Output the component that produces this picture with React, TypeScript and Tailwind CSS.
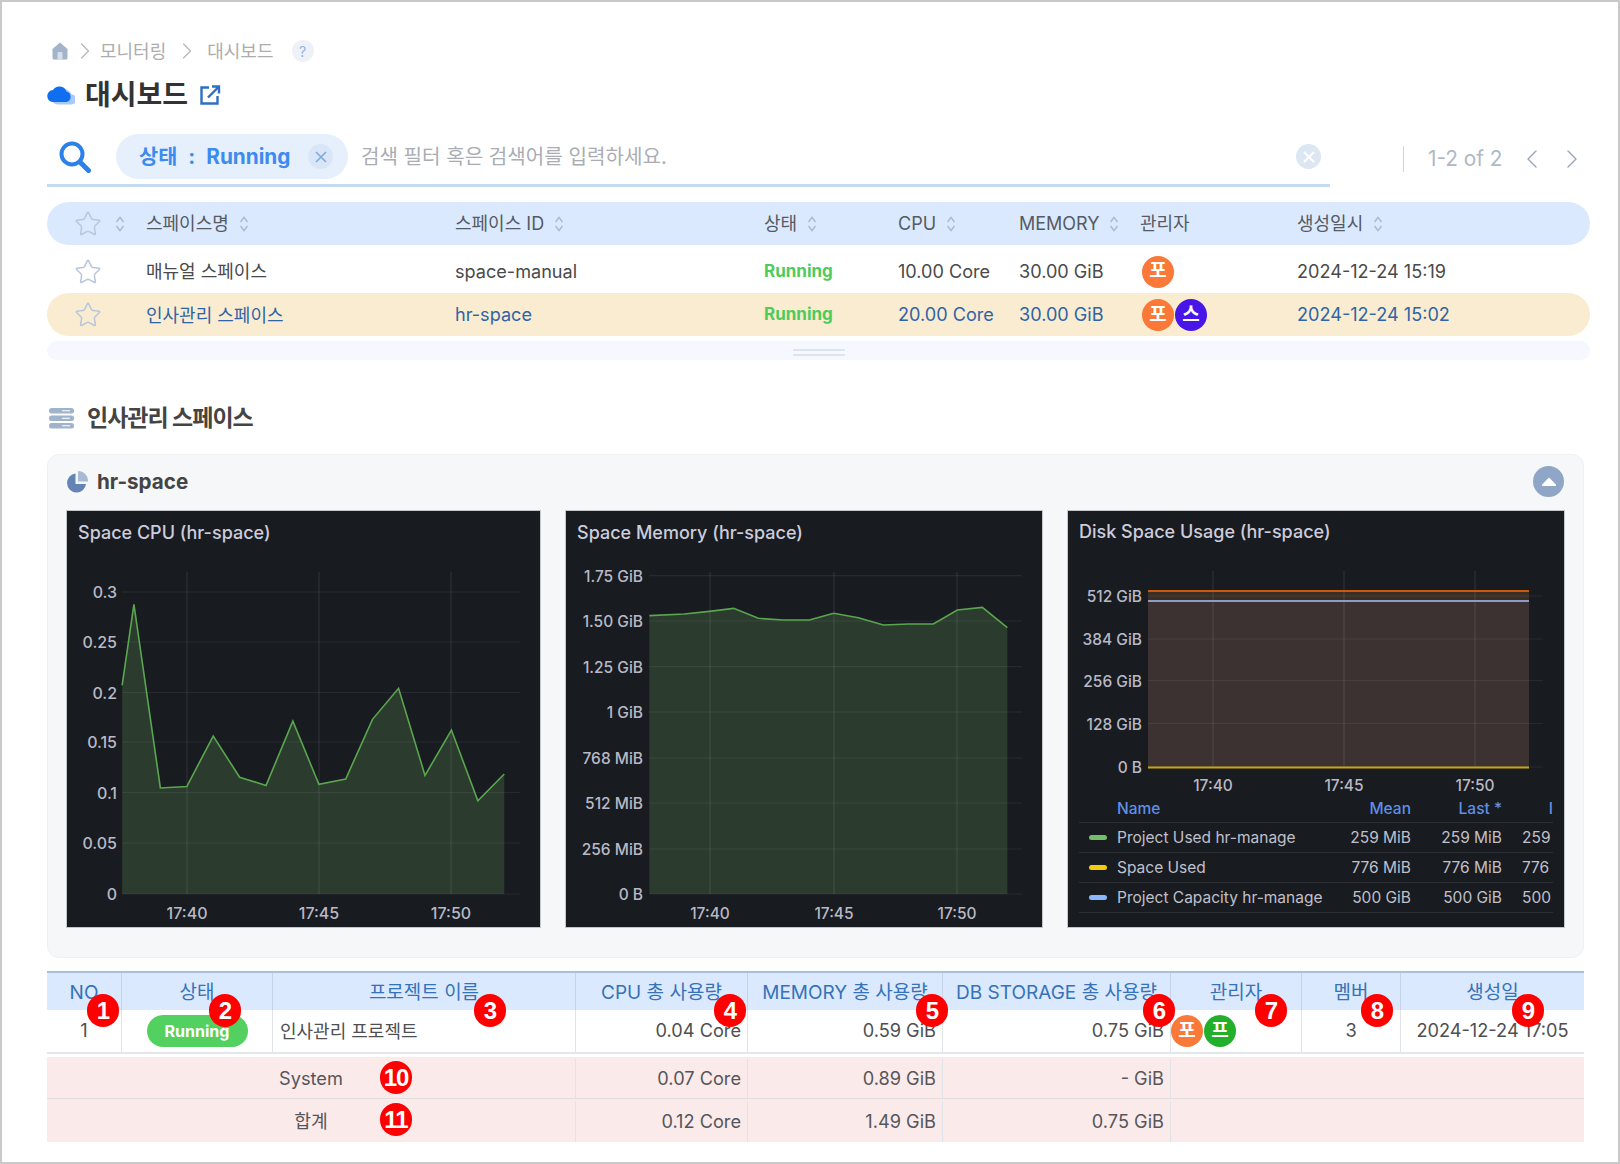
import React from "react";
import { Star, ChevronLeft, ChevronRight, ChevronRight as Crumb } from "lucide-react";

const Sort = () => (
  <svg width="10" height="16" viewBox="0 0 10 16" fill="none" stroke="#a9b9cf" strokeWidth="1.4" className="shrink-0">
    <path d="M1.5 6 L5 1.5 L8.5 6" />
    <path d="M1.5 10 L5 14.5 L8.5 10" />
  </svg>
);

const Avatar = ({ c, t }: { c: string; t: string }) => (
  <span className={`w-8 h-8 rounded-full flex items-center justify-center text-white text-[19px] font-bold shrink-0 ${c}`}>{t}</span>
);

const spaceCols = "grid grid-cols-[99px_309px_309px_134px_121px_121px_157px_1fr] items-center";

const SpaceRow = ({ name, id, cpu, date, selected, avatars }: { name: string; id: string; cpu: string; date: string; selected?: boolean; avatars: React.ReactNode }) => (
  <div className={`${spaceCols} ${selected ? "h-[43px] pt-[1px] bg-[#faecd0] rounded-full text-[#2f64a8]" : "h-[48px] pt-[5px] text-[#4a4a4a]"} text-[18.1px]`}>
    <span className="pl-[27px]"><Star size={28} strokeWidth={1.3} className="text-[#b7c7dc]" /></span>
    <span className="text-[18px]">{name}</span>
    <span>{id}</span>
    <span className="text-[#4fcb5c] font-bold text-[17px]">Running</span>
    <span>{cpu}</span>
    <span>30.00 GiB</span>
    <span className="flex gap-px pl-[2px]">{avatars}</span>
    <span>{date}</span>
  </div>
);

const Head = ({ t, sort = true, className = "" }: { t: string; sort?: boolean; className?: string }) => (
  <span className={`flex items-center gap-[10px] ${className}`}>{t}{sort && <Sort />}</span>
);

const grid = "rgba(204,204,220,0.09)";
const vgrid = "rgba(204,204,220,0.13)";

type Tick = [string, number];

function Plot({ ticks, labelX, xs, xl, gridX, gridTop, gridBottom, small }: { ticks: Tick[]; labelX: number; xs: number[]; xl: number; gridX: [number, number]; gridTop: number; gridBottom: number; small?: boolean }) {
  const axisText = small ? "text-[15.5px] font-medium fill-[#b9b9c6]" : "text-[16px] font-medium fill-[#b9b9c6]";
  return (
    <>
      {ticks.map(([t, y]) => (
        <g key={t}>
          <line x1={gridX[0]} x2={gridX[1]} y1={y} y2={y} stroke={grid} strokeWidth="1.2" />
          <text x={labelX} y={y + 6} textAnchor="end" className={axisText}>{t}</text>
        </g>
      ))}
      {xs.map((x, i) => (
        <g key={x}>
          <line x1={x} x2={x} y1={gridTop} y2={gridBottom} stroke={vgrid} strokeWidth="1.2" />
          <text x={x} y={xl} textAnchor="middle" className={axisText}>{["17:40", "17:45", "17:50"][i]}</text>
        </g>
      ))}
    </>
  );
}

const Panel = ({ title, className, titleClass = "pl-[11px] pt-[10px]", children }: { title: string; className: string; titleClass?: string; children: React.ReactNode }) => (
  <div className={`${className} h-[418px] bg-[#181b1f] border border-[#c4c6c9] flex flex-col overflow-hidden shrink-0`}>
    <div className={`h-[44px] shrink-0 text-[18px] leading-[24px] font-medium text-[#ccccdc] ${titleClass}`}>{title}</div>
    {children}
  </div>
);

function CpuChart() {
  const raw = [[342,830],[375,603],[449,1117],[523,1113],[597,972],[671,1087],[745,1110],[820,930],[893,1107],[968,1092],[1043,925],[1116,838],[1190,1082],[1264,955],[1338,1153],[1412,1078]];
  const p = raw.map(([x, y]) => [x / 2.8 - 67, 390 + y / 2.8 - 511]);
  const line = p.map((q) => q.join(",")).join(" ");
  const base = 384;
  const ticks: Tick[] = [["0.3",82],["0.25",132],["0.2",182.5],["0.15",232],["0.1",282.5],["0.05",333],["0",384]];
  return (
    <Panel title="Space CPU (hr-space)" className="w-[475px]">
      <svg width="473" height="372" viewBox="0 45 473 372">
        <polygon points={`${p[0][0]},${base} ${line} ${p[p.length-1][0]},${base}`} fill="#2b3b2d" />
        <Plot ticks={ticks} labelX={50} xs={[120,252,384]} xl={409} gridX={[55,453]} gridTop={62} gridBottom={384} />
        <polyline points={line} fill="none" stroke="#5aa64f" strokeWidth="1.6" />
      </svg>
    </Panel>
  );
}

function MemChart() {
  const raw = [[298,380],[403,375],[478,367],[551,358],[625,388],[700,393],[778,393],[851,373],[925,386],[1000,408],[1075,405],[1150,405],[1222,363],[1297,355],[1372,416]];
  const p = raw.map(([x, y]) => [550 + x / 3 - 566, 490 + y / 3 - 511]);
  const line = p.map((q) => q.join(",")).join(" ");
  const base = 384;
  const ys = [65.7,111,156.7,202,248,293,339,384];
  const labels = ["1.75 GiB","1.50 GiB","1.25 GiB","1 GiB","768 MiB","512 MiB","256 MiB","0 B"];
  const ticks: Tick[] = labels.map((l, i) => [l, ys[i]]);
  return (
    <Panel title="Space Memory (hr-space)" className="w-[478px]">
      <svg width="476" height="372" viewBox="0 45 476 372">
        <polygon points={`${p[0][0]},${base} ${line} ${p[p.length-1][0]},${base}`} fill="#2b3b2d" />
        <Plot small ticks={ticks} labelX={77} xs={[144,268,391]} xl={409} gridX={[83,456]} gridTop={62} gridBottom={384} />
        <polyline points={line} fill="none" stroke="#5aa64f" strokeWidth="1.6" />
      </svg>
    </Panel>
  );
}

const legendCols = "grid grid-cols-[38px_204px_90px_91px_51px] items-center";

const LegendRow = ({ c, n, a, t }: { c: string; n: string; a: string; t: string }) => (
  <div className={`${legendCols} h-[30px] border-b border-[#2c2f34] text-[15.5px] text-[#c0c0cc] whitespace-nowrap`}>
    <span className={`w-[18px] h-[5px] rounded-full ml-[10px] ${c}`} />
    <span>{n}</span>
    <span className="text-right">{a}</span>
    <span className="text-right">{a}</span>
    <span className="pl-[20px]">{t}</span>
  </div>
);

function DiskChart() {
  const ticks: Tick[] = [["512 GiB",85],["384 GiB",128],["256 GiB",169.5],["128 GiB",212.5],["0 B",256]];
  return (
    <Panel title="Disk Space Usage (hr-space)" className="w-[498px]" titleClass="pl-[11px] pt-[9px]">
      <svg width="496" height="242" viewBox="0 44 496 242" className="shrink-0">
        <rect x="80" y="80" width="381" height="10" fill="#3a2d24" />
        <rect x="80" y="90" width="381" height="167" fill="#3c3231" />
        <Plot small ticks={ticks} labelX={74} xs={[145,276,407]} xl={280} gridX={[80,475]} gridTop={60} gridBottom={257} />
        <line x1="80" x2="461" y1="80" y2="80" stroke="#c8590e" strokeWidth="2" />
        <line x1="80" x2="461" y1="90" y2="90" stroke="#8c9cc6" strokeWidth="2" />
        <line x1="80" x2="461" y1="256.5" y2="256.5" stroke="#c9a50f" strokeWidth="2" />
      </svg>
      <div className="mx-[11px] w-[474px]">
        <div className={`${legendCols} h-[26px] pb-[3px] border-b border-[#2c2f34] text-[15.5px] font-medium text-[#5f8fe6] whitespace-nowrap`}>
          <span />
          <span>Name</span>
          <span className="text-right">Mean</span>
          <span className="text-right">Last *</span>
          <span className="text-right">I</span>
        </div>
        <LegendRow c="bg-[#73bf69]" n="Project Used hr-manage" a="259 MiB" t="259" />
        <LegendRow c="bg-[#f2cc0c]" n="Space Used" a="776 MiB" t="776" />
        <LegendRow c="bg-[#8ab8ff]" n="Project Capacity hr-manage" a="500 GiB" t="500" />
      </div>
    </Panel>
  );
}

const tableCols = "grid grid-cols-[75px_151px_303px_172px_195px_228px_131px_99px_183px]";

const Th = ({ t, last }: { t: string; last?: boolean }) => (
  <div className={`flex items-center justify-center pt-[3px] text-[19px] text-[#3672b8] whitespace-nowrap ${last ? "" : "border-r border-[#c6d3e4]"}`}>{t}</div>
);

const Td = ({ children, className = "px-[7px]" }: { children?: React.ReactNode; className?: string }) => (
  <div className={`flex items-center border-r border-[#e0e4e8] last:border-r-0 ${className}`}>{children}</div>
);

const badges = [
  { n: "1", c: "left-[40px] top-[23px]" },
  { n: "2", c: "left-[162px] top-[23px]" },
  { n: "3", c: "left-[427px] top-[23px]" },
  { n: "4", c: "left-[667px] top-[23px]" },
  { n: "5", c: "left-[869px] top-[23px]" },
  { n: "6", c: "left-[1096px] top-[23px]" },
  { n: "7", c: "left-[1208px] top-[23px]" },
  { n: "8", c: "left-[1314px] top-[23px]" },
  { n: "9", c: "left-[1465px] top-[23px]" },
  { n: "10", c: "left-[333px] top-[90px]" },
  { n: "11", c: "left-[333px] top-[132px]" },
];

const PinkRow = ({ name, cpu, mem, db }: { name: string; cpu: string; mem: string; db: string }) => (
  <div className={`${tableCols} h-[42px] last:h-[43px] pt-[2px] bg-[#fbeaea] text-[#55565a] border-b border-[#e3dede] last:border-b-0`}>
    <Td className="col-span-3 justify-center">{name}</Td>
    <Td className="justify-end px-[6px]">{cpu}</Td>
    <Td className="justify-end px-[6px]">{mem}</Td>
    <Td className="justify-end px-[6px]">{db}</Td>
    <div className="col-span-3" />
  </div>
);

export default function App() {
  return (
    <div className="w-[1620px] h-[1164px] box-border border-[2px] border-[#c9c9c9] bg-white pl-[45px] pr-[28px] pt-[38px] overflow-hidden font-[family-name:Inter,'Noto_Sans_CJK_KR',sans-serif]">
      {/* breadcrumb */}
      <div className="h-[22px] flex items-center text-[18px] text-[#adadad]">
        <svg width="16" height="18" viewBox="0 0 16 18" className="ml-[5px] shrink-0">
          <path d="M8 0.5 L15.5 7 V16 a1.5 1.5 0 0 1 -1.5 1.5 H2 a1.5 1.5 0 0 1 -1.5 -1.5 V7 Z" fill="#a3b3c9" />
          <rect x="5.5" y="10" width="5" height="7.5" rx="1" fill="#d6dee9" />
        </svg>
        <Crumb size={28} strokeWidth={1} className="ml-[3px] shrink-0 text-[#b5b5b5]" />
        <span className="ml-[1px]">모니터링</span>
        <Crumb size={28} strokeWidth={1} className="ml-[7px] shrink-0 text-[#b5b5b5]" />
        <span className="ml-[6px]">대시보드</span>
        <span className="ml-[18px] w-[22px] h-[22px] rounded-full bg-[#eef2f8] flex items-center justify-center text-[14px] text-[#8fb3e6]">?</span>
      </div>
      {/* title */}
      <div className="mt-[22px] h-[22px] flex items-center">
        <svg width="28" height="20" viewBox="0 0 28 20" className="shrink-0">
          <path d="M9 18 a6 6 0 0 1 0 -12 a8 8 0 0 1 14 2 a5 5 0 0 1 0 10 Z" transform="translate(1.5 1.5)" fill="#a9c9f7" />
          <path d="M6.5 17 a6 6 0 0 1 -0.5 -12 a7.5 7.5 0 0 1 13.5 1.5 a5.5 5.5 0 0 1 0.5 10.5 Z" fill="#0f6ff0" />
        </svg>
        <span className="ml-[10px] text-[28px] leading-[22px] font-bold text-[#333]">대시보드</span>
        <svg width="22" height="21" viewBox="0 0 22 21" fill="none" stroke="#2f6fc0" strokeWidth="2.4" className="ml-[11px] shrink-0">
          <path d="M10 2.5 H2.5 V18.5 H18.5 V11" />
          <path d="M9 12.5 L19.5 2 M13 1.5 H20 V8.5" />
        </svg>
      </div>
      {/* search */}
      <div className="mt-[28px] flex items-start">
        <div className="w-[1283px] h-[53px] border-b-[3px] border-[#c5d9f0] flex items-start">
          <svg width="32" height="32" viewBox="0 0 32 32" fill="none" stroke="#2b80ea" className="ml-[12px] mt-[7px] shrink-0">
            <circle cx="13" cy="13" r="10.5" strokeWidth="4" />
            <path d="M21 21 L29.5 29.5" strokeWidth="5" strokeLinecap="round" />
          </svg>
          <div className="ml-[25px] w-[232px] h-[45px] rounded-full bg-[#e6f0fd] flex items-center pl-[23px] shrink-0 text-[20.8px] font-bold text-[#3d8bee] whitespace-nowrap">
            <span className="pt-[1px]">상태</span><span className="ml-[11px] pt-[1px]">:</span><span className="ml-[11px] pt-[1px]">Running</span>
            <span className="ml-[18px] w-[25px] h-[25px] rounded-full bg-[#d8e6f8] flex items-center justify-center">
              <svg width="12" height="12" viewBox="0 0 12 12" stroke="#7fa9e0" strokeWidth="1.6"><path d="M1 1 L11 11 M11 1 L1 11" /></svg>
            </span>
          </div>
          <span className="ml-[13px] h-[45px] pt-[2px] flex items-center text-[20.1px] text-[#a9adb3] flex-1 whitespace-nowrap">검색 필터 혹은 검색어를 입력하세요.</span>
          <span className="mr-[9px] mt-[10px] w-[25px] h-[25px] rounded-full bg-[#dde6f3] flex items-center justify-center shrink-0">
            <svg width="12" height="12" viewBox="0 0 12 12" stroke="#fff" strokeWidth="2"><path d="M1 1 L11 11 M11 1 L1 11" /></svg>
          </span>
        </div>
        <div className="ml-[73px] mt-[12px] h-[26px] border-l border-[#cfd5dc] pl-[24px] flex items-center text-[20.8px] text-[#aeb8c6] whitespace-nowrap">
          <span>1-2 of 2</span>
          <ChevronLeft size={32} strokeWidth={1} className="ml-[13px] shrink-0 text-[#9aa7b8]" />
          <ChevronRight size={32} strokeWidth={1} className="ml-[8px] shrink-0 text-[#9aa7b8]" />
        </div>
      </div>
      {/* spaces table */}
      <div className="mt-[15px]">
        <div className={`${spaceCols} h-[43px] bg-[#dbe9fe] rounded-full text-[18px] text-[#555b63]`}>
          <span className="pl-[27px] flex items-center gap-[13px]"><Star size={28} strokeWidth={1.3} className="text-[#b7c7dc]" /><Sort /></span>
          <Head t="스페이스명" />
          <Head t="스페이스 ID" />
          <Head t="상태" />
          <Head t="CPU" />
          <Head t="MEMORY" />
          <Head t="관리자" sort={false} />
          <Head t="생성일시" />
        </div>
        <SpaceRow name="매뉴얼 스페이스" id="space-manual" cpu="10.00 Core" date="2024-12-24 15:19" avatars={<Avatar c="bg-[#fa7838]" t="포" />} />
        <SpaceRow selected name="인사관리 스페이스" id="hr-space" cpu="20.00 Core" date="2024-12-24 15:02" avatars={<><Avatar c="bg-[#fa7838]" t="포" /><Avatar c="bg-[#4816e6]" t="스" /></>} />
        <div className="mt-[5px] h-[19px] rounded-full bg-[#f5f8fe] flex justify-center items-center pt-[4px]">
          <div className="w-[52px] h-[7px] border-y-2 border-[#dbe4f1]" />
        </div>
      </div>
      {/* section title */}
      <div className="mt-[46px] h-[24px] flex items-center">
        <svg width="25" height="21" viewBox="0 0 25 21" className="ml-[2px] shrink-0">
          <rect y="0" width="25" height="5.5" rx="2.5" fill="#a0b3cd" />
          <rect y="7.5" width="25" height="5.5" rx="2.5" fill="#a0b3cd" />
          <rect y="15" width="25" height="5.5" rx="2.5" fill="#a0b3cd" />
          <path d="M13 2.75 H21 M13 10.25 H21 M13 17.75 H21" stroke="#fff" strokeWidth="1" />
        </svg>
        <span className="ml-[13px] text-[23px] font-bold text-[#444] tracking-[-1px]">인사관리 스페이스</span>
      </div>
      {/* card */}
      <div className="mt-[24px] w-[1537px] h-[504px] rounded-[12px] bg-[#f5f7f9] border border-[#eef0f3] pl-[18px] pt-[11px]">
        <div className="h-[44px] flex items-start">
          <svg width="22" height="22" viewBox="0 0 22 22" className="mt-[5px] shrink-0">
            <path d="M9.5 2.5 A9.5 9.5 0 1 0 20 13 H9.5 Z" fill="#6484b5" />
            <path d="M12 0 A10 10 0 0 1 22 10.5 H12 Z" fill="#a8bad6" />
          </svg>
          <span className="ml-[9px] mt-[3px] text-[20.6px] leading-[26px] font-bold text-[#444]">hr-space</span>
          <span className="ml-auto mr-[19px] w-[31px] h-[31px] rounded-full bg-[#8fa6c6] flex items-center justify-center">
            <svg width="14" height="9" viewBox="0 0 14 9"><path d="M7 0.5 L13.5 7 a1 1 0 0 1 -1 2 H1.5 a1 1 0 0 1 -1 -2 Z" fill="#fff" /></svg>
          </span>
        </div>
        <div className="flex">
          <CpuChart />
          <div className="ml-[24px]"><MemChart /></div>
          <div className="ml-[24px]"><DiskChart /></div>
        </div>
      </div>
      {/* bottom table */}
      <div className="relative mt-[13px] w-[1537px] text-[18.2px]">
        <div className={`${tableCols} h-[39px] bg-[#dbe9fe] border-t-[2px] border-[#a9c0dc]`}>
          {["NO","상태","프로젝트 이름","CPU 총 사용량","MEMORY 총 사용량","DB STORAGE 총 사용량","관리자","멤버"].map((t) => <Th key={t} t={t} />)}
          <Th t="생성일" last />
        </div>
        <div className={`${tableCols} h-[44px] border-b-[2px] border-[#e3e6ea] text-[#4e4f52]`}>
          <Td className="justify-center">1</Td>
          <Td className="justify-center">
            <span className="w-[101px] h-[32px] rounded-full bg-[#52d160] text-white font-bold text-[16px] flex items-center justify-center">Running</span>
          </Td>
          <Td className="px-[7px] text-[18px]">인사관리 프로젝트</Td>
          <Td className="justify-end px-[6px]">0.04 Core</Td>
          <Td className="justify-end px-[6px]">0.59 GiB</Td>
          <Td className="justify-end px-[6px]">0.75 GiB</Td>
          <Td className="gap-px"><Avatar c="bg-[#fa7838]" t="포" /><Avatar c="bg-[#22b02a]" t="프" /></Td>
          <Td className="justify-center">3</Td>
          <Td className="justify-center whitespace-nowrap">2024-12-24 17:05</Td>
        </div>
        <div className="mt-[3px]">
          <PinkRow name="System" cpu="0.07 Core" mem="0.89 GiB" db="- GiB" />
          <PinkRow name="합계" cpu="0.12 Core" mem="1.49 GiB" db="0.75 GiB" />
        </div>
        {badges.map((b) => (
          <span key={b.n} className={`absolute ${b.c} w-8 h-[33px] rounded-full bg-[#ff0000] text-white flex items-center justify-center text-[24px] font-bold font-[family-name:'Liberation_Sans',sans-serif] tracking-[-1px]`}>{b.n}</span>
        ))}
      </div>
    </div>
  );
}
